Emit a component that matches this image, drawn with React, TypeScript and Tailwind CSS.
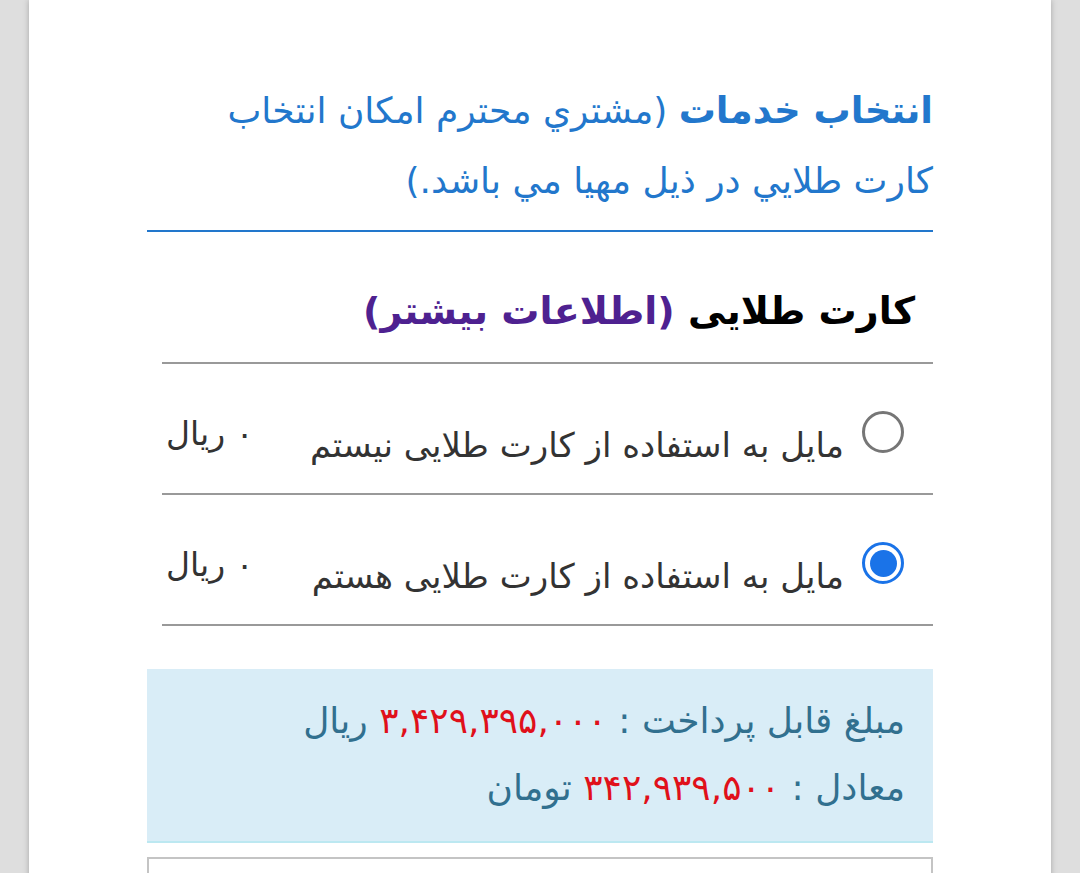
import React, { useState } from "react";

const font = { fontFamily: '"DejaVu Sans", "Noto Sans", sans-serif' };

function Radio({ checked }: { checked: boolean }) {
  return checked ? (
    <span className="flex h-[42px] w-[42px] shrink-0 items-center justify-center rounded-full border-[3px] border-[#1a73e8] bg-white">
      <span className="h-[27px] w-[27px] rounded-full bg-[#1a73e8]" />
    </span>
  ) : (
    <span className="h-[42px] w-[42px] shrink-0 rounded-full border-[3px] border-[#767676] bg-white" />
  );
}

export default function App() {
  const [choice, setChoice] = useState("yes");

  const options = [
    { id: "no", label: "مایل به استفاده از کارت طلایی نیستم" },
    { id: "yes", label: "مایل به استفاده از کارت طلایی هستم" },
  ];

  return (
    <div className="h-screen overflow-hidden bg-[#dedede]" style={font}>
      <div dir="rtl" className="mx-[29px] min-h-[873px] bg-white px-[118px] pt-[76px] shadow-[0_0_6px_rgba(0,0,0,0.25)]">
        {/* انتخاب خدمات */}
        <h2 className="border-b-2 border-[#2277cc] pb-[14px] text-[36px] leading-[70px] text-[#2277cc]">
          <span className="text-[37px] font-bold">انتخاب خدمات</span> (مشتري محترم امكان انتخاب
          <br />
          كارت طلايي در ذيل مهيا مي باشد.)
        </h2>

        <section className="ml-[15px]">
          <h3 className="pt-[38px] pb-[10px] pr-[18px] text-[38px] font-bold leading-[82px] text-black">
            کارت طلایی <a className="text-[#4e2190]">(اطلاعات بیشتر)</a>
          </h3>

          <div className="border-t-2 border-[#999]">
            {options.map((o) => (
              <label
                key={o.id}
                onClick={() => setChoice(o.id)}
                className="flex h-[131px] items-start border-b-2 border-[#999] pt-[47px] pr-[29px] text-[#333]"
              >
                <Radio checked={choice === o.id} />
                <span className="mr-[18px] mt-[11px] text-[34px] leading-[46px]">{o.label}</span>
                <span className="mr-auto pl-[4px] text-[33px] leading-[46px]">۰ ریال</span>
              </label>
            ))}
          </div>
        </section>

        {/* مبلغ قابل پرداخت */}
        <div className="mt-[43px] border-b-2 border-[#bce8f1] bg-[#d9edf7] px-[28px] pt-[18px] pb-[20px] text-[36px] leading-[67px] text-[#31708f]">
          <div>
            مبلغ قابل پرداخت : <span className="text-[#e0101a]">۳,۴۲۹,۳۹۵,۰۰۰</span> ریال
          </div>
          <div>
            معادل : <span className="text-[#e0101a]">۳۴۲,۹۳۹,۵۰۰</span> تومان
          </div>
        </div>

        <div className="mt-[14px] h-[60px] border-2 border-[#c4c4c4]" />
      </div>
    </div>
  );
}
